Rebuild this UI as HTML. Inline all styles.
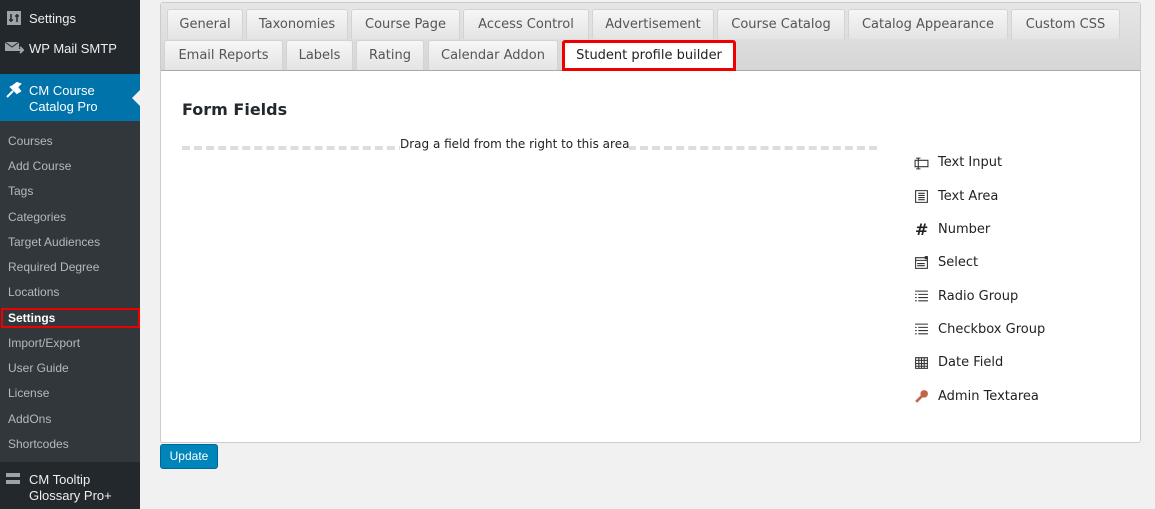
<!DOCTYPE html>
<html><head><meta charset="utf-8"><style>
*{box-sizing:border-box;margin:0;padding:0}
body{width:1155px;height:509px;background:#f1f1f1;position:relative;overflow:hidden;font-family:"Liberation Sans",sans-serif}
#side{position:absolute;left:0;top:0;width:140px;height:509px;background:#32373c}
.top{position:absolute;left:0;width:140px;background:#23282d;color:#eee;font-size:13px}
.sub{position:absolute;left:8px;color:#b4b9be;font-size:12px}
#panel{position:absolute;left:160px;top:2px;width:981px;height:441px;background:#fff;border:1px solid #ccc;border-radius:3px}
#tabs{position:absolute;left:0;top:0;width:979px;height:68px;background:linear-gradient(#e6e6e6,#d6d6d6);border-bottom:1px solid #aaa}
.tab{position:absolute;height:30px;background:linear-gradient(#f6f6f6,#e4e4e4);border:1px solid #d3d3d3;border-bottom:none;border-radius:3px 3px 0 0;font-family:"DejaVu Sans",sans-serif;font-size:13px;color:#555;text-align:center;line-height:30px}
.f{position:absolute;left:938px;font-family:"DejaVu Sans",sans-serif;font-size:13px;color:#222}
.ic{position:absolute;left:914px;width:15px;height:15px}
</style></head><body>
<div id="side">
<div class="top" style="top:0;height:74px"></div>
<svg style="position:absolute;left:7px;top:11px" width="14" height="14"><rect width="14" height="14" fill="#9ea3a8"/><path d="M4 3v8M10 3v8M2 9h4M8 5h4" stroke="#23282d" stroke-width="1.5"/></svg>
<div class="top" style="top:11px;left:29px;width:100px;background:none">Settings</div>
<svg style="position:absolute;left:4px;top:40px" width="20" height="16"><path d="M1 2h14v9H1z" fill="#9ea3a8"/><path d="M1 2l7 5 7-5" stroke="#23282d" fill="none"/><path d="M13 10h6l-3-3m3 3l-3 3" stroke="#9ea3a8" stroke-width="2" fill="none"/></svg>
<div class="top" style="top:41px;left:29px;width:110px;background:none">WP Mail SMTP</div>
<div style="position:absolute;left:0;top:74px;width:140px;height:47px;background:#0073aa"></div>
<div style="position:absolute;left:132px;top:90px;border:8px solid transparent;border-right-color:#f1f1f1;border-left:none"></div>
<svg style="position:absolute;left:5px;top:82px" width="18" height="16"><path d="M2 15l6-6M6 5l6 6 3-2-3-4 3-3-3-1-4 3z" stroke="#fff" stroke-width="2" fill="#fff"/></svg>
<div style="position:absolute;left:29px;top:83px;color:#fff;font-size:13px;line-height:16px">CM Course<br>Catalog Pro</div>
<div class="sub" style="top:134px">Courses</div>
<div class="sub" style="top:159px">Add Course</div>
<div class="sub" style="top:184px">Tags</div>
<div class="sub" style="top:210px">Categories</div>
<div class="sub" style="top:235px">Target Audiences</div>
<div class="sub" style="top:260px">Required Degree</div>
<div class="sub" style="top:285px">Locations</div>
<div style="position:absolute;left:1px;top:308px;width:139px;height:20px;border:2px solid #e00"></div>
<div class="sub" style="top:311px;color:#fff;font-weight:bold">Settings</div>
<div class="sub" style="top:336px">Import/Export</div>
<div class="sub" style="top:361px">User Guide</div>
<div class="sub" style="top:386px">License</div>
<div class="sub" style="top:412px">AddOns</div>
<div class="sub" style="top:437px">Shortcodes</div>
<div class="top" style="top:462px;height:47px"></div>
<div style="position:absolute;left:6px;top:473px;width:14px;height:4px;background:#9ea3a8"></div>
<div style="position:absolute;left:6px;top:480px;width:14px;height:4px;background:#9ea3a8"></div>
<div style="position:absolute;left:29px;top:472px;color:#eee;font-size:13px;line-height:16px">CM Tooltip<br>Glossary Pro+</div>
</div>
<div id="panel">
<div id="tabs">
<div class="tab" style="left:6px;top:6px;width:76px">General</div>
<div class="tab" style="left:85px;top:6px;width:102px">Taxonomies</div>
<div class="tab" style="left:190px;top:6px;width:109px">Course Page</div>
<div class="tab" style="left:302px;top:6px;width:126px">Access Control</div>
<div class="tab" style="left:431px;top:6px;width:122px">Advertisement</div>
<div class="tab" style="left:556px;top:6px;width:128px">Course Catalog</div>
<div class="tab" style="left:687px;top:6px;width:160px">Catalog Appearance</div>
<div class="tab" style="left:850px;top:6px;width:109px">Custom CSS</div>
<div class="tab" style="left:3px;top:37px;width:119px">Email Reports</div>
<div class="tab" style="left:125px;top:37px;width:67px">Labels</div>
<div class="tab" style="left:195px;top:37px;width:68px">Rating</div>
<div class="tab" style="left:267px;top:37px;width:130px">Calendar Addon</div>
<div class="tab" style="left:401px;top:37px;width:174px;height:31px;background:#fff;border:3px solid #e00;color:#222;line-height:25px">Student profile builder</div>
</div>
<div style="position:absolute;left:21px;top:97px;font-family:'DejaVu Sans',sans-serif;font-weight:bold;font-size:16px;color:#23282d">Form Fields</div>
<div style="position:absolute;left:21px;top:143px;width:695px;border-top:4px dashed #ddd"></div>
<div style="position:absolute;left:239px;top:134px;background:#fff;font-family:'DejaVu Sans',sans-serif;font-size:12px;color:#222">Drag a field from the right to this area</div>
</div>
<svg class="ic" style="top:156px" viewBox="0 0 14 14"><path d="M1 4h12v6H1zM4 2v10M2 2h4M2 12h4" stroke="#333" fill="none"/></svg>
<div class="f" style="top:155px">Text Input</div>
<svg class="ic" style="top:189px" viewBox="0 0 14 14"><path d="M1.5 1.5h11v11h-11zM4 4h6M4 6h6M4 8h6M4 10h6" stroke="#333" fill="none"/></svg>
<div class="f" style="top:189px">Text Area</div>
<div class="f" style="top:220px;left:915px;font-weight:bold;font-size:16px">#</div>
<div class="f" style="top:222px">Number</div>
<svg class="ic" style="top:255px" viewBox="0 0 14 14"><path d="M1.5 2.5h11v10h-11zM1.5 5h11M3 8h7M3 10h7" stroke="#333" fill="none"/><path d="M10 1h3v3h-3z" fill="#333"/></svg>
<div class="f" style="top:255px">Select</div>
<svg class="ic" style="top:289px" viewBox="0 0 14 14"><path d="M1 2h12M4 5h9M4 8h9M4 11h9M1 5h1.5M1 8h1.5M1 11h1.5" stroke="#333" fill="none"/></svg>
<div class="f" style="top:289px">Radio Group</div>
<svg class="ic" style="top:322px" viewBox="0 0 14 14"><path d="M1 2h12M4 5h9M4 8h9M4 11h9M1 5h1.5M1 8h1.5M1 11h1.5" stroke="#333" fill="none"/></svg>
<div class="f" style="top:322px">Checkbox Group</div>
<svg class="ic" style="top:355px" viewBox="0 0 14 14"><path d="M1.5 2.5h11v10h-11zM1.5 5h11M1.5 8h11M1.5 10.5h11M4.5 2.5v10M7 2.5v10M9.5 2.5v10" stroke="#333" fill="none"/></svg>
<div class="f" style="top:355px">Date Field</div>
<svg class="ic" style="top:389px" viewBox="0 0 14 14"><circle cx="9.5" cy="4.5" r="3.5" fill="#c0654a"/><path d="M8 6l-6 6" stroke="#c0654a" stroke-width="2.5"/></svg>
<div class="f" style="top:389px">Admin Textarea</div>
<div style="position:absolute;left:160px;top:444px;width:58px;height:25px;background:#0085ba;border:1px solid #006799;border-radius:3px;color:#fff;font-size:12px;text-align:center;line-height:23px">Update</div>
</body></html>
